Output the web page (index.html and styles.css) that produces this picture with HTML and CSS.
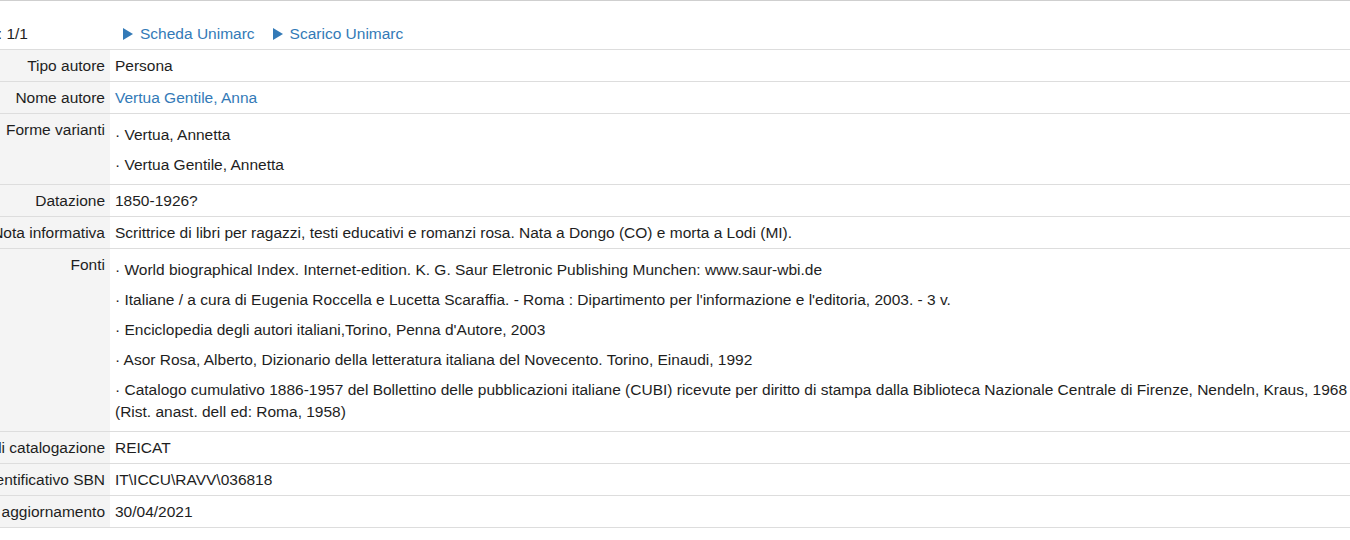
FILE: index.html
```html
<!DOCTYPE html>
<html lang="it">
<head>
<meta charset="utf-8">
<title>Vertua Gentile, Anna</title>
<link rel="stylesheet" href="styles.css">
</head>
<body>
<div class="record">
  <div class="toolbar">
    <div class="counter"><span>Risultati: 1/1</span></div>
    <div class="actions">
      <a class="action" href="#"><svg class="tri" viewBox="0 0 10 12" width="10" height="12"><polygon points="0,0 10,6 0,12" /></svg>Scheda Unimarc</a>
      <a class="action" href="#"><svg class="tri" viewBox="0 0 10 12" width="10" height="12"><polygon points="0,0 10,6 0,12" /></svg>Scarico Unimarc</a>
    </div>
  </div>
  <div class="row">
    <div class="label"><span>Tipo autore</span></div>
    <div class="value">Persona</div>
  </div>
  <div class="row">
    <div class="label"><span>Nome autore</span></div>
    <div class="value"><a class="link" href="#">Vertua Gentile, Anna</a></div>
  </div>
  <div class="row">
    <div class="label"><span>Forme varianti</span></div>
    <div class="value">
      <div class="item">· Vertua, Annetta</div>
      <div class="item">· Vertua Gentile, Annetta</div>
    </div>
  </div>
  <div class="row">
    <div class="label"><span>Datazione</span></div>
    <div class="value">1850-1926?</div>
  </div>
  <div class="row">
    <div class="label"><span>Nota informativa</span></div>
    <div class="value">Scrittrice di libri per ragazzi, testi educativi e romanzi rosa. Nata a Dongo (CO) e morta a Lodi (MI).</div>
  </div>
  <div class="row">
    <div class="label"><span>Fonti</span></div>
    <div class="value">
      <div class="item">· World biographical Index. Internet-edition. K. G. Saur Eletronic Publishing Munchen: www.saur-wbi.de</div>
      <div class="item">· Italiane / a cura di Eugenia Roccella e Lucetta Scaraffia. - Roma : Dipartimento per l'informazione e l'editoria, 2003. - 3 v.</div>
      <div class="item">· Enciclopedia degli autori italiani,Torino, Penna d'Autore, 2003</div>
      <div class="item">· Asor Rosa, Alberto, Dizionario della letteratura italiana del Novecento. Torino, Einaudi, 1992</div>
      <div class="item">· Catalogo cumulativo 1886-1957 del Bollettino delle pubblicazioni italiane (CUBI) ricevute per diritto di stampa dalla Biblioteca Nazionale Centrale di Firenze, Nendeln, Kraus, 1968 (Rist. anast. dell ed: Roma, 1958)</div>
    </div>
  </div>
  <div class="row">
    <div class="label"><span>Regole di catalogazione</span></div>
    <div class="value">REICAT</div>
  </div>
  <div class="row">
    <div class="label"><span>Codice identificativo SBN</span></div>
    <div class="value">IT\ICCU\RAVV\036818</div>
  </div>
  <div class="row last">
    <div class="label"><span>Data ultimo aggiornamento</span></div>
    <div class="value">30/04/2021</div>
  </div>
</div>
</body>
</html>
```

FILE: styles.css
```css
html, body {
  margin: 0;
  padding: 0;
  overflow: hidden;
  background: #fff;
}

body {
  font-family: "Liberation Sans", Arial, sans-serif;
  font-size: 15.5px;
  line-height: 21px;
  color: #1e1e1e;
}

.record {
  width: 1355px;
  border-top: 1px solid #cfcfcf;
}

.toolbar {
  display: flex;
  padding: 22px 0 5px 0;
}

.counter {
  width: 110px;
  flex: none;
  display: flex;
  justify-content: flex-end;
  overflow: hidden;
  white-space: nowrap;
  padding-right: 82px;
  box-sizing: border-box;
}

.actions {
  display: flex;
  padding-left: 13px;
  gap: 18px;
}

.action {
  display: flex;
  align-items: center;
  color: #337ab7;
  text-decoration: none;
}

.tri {
  fill: #337ab7;
  margin-right: 7px;
}

.row {
  display: flex;
  border-top: 1px solid #ddd;
}

.row.last {
  border-bottom: 1px solid #ddd;
}

.label {
  width: 110px;
  flex: none;
  box-sizing: border-box;
  background: #f4f4f4;
  display: flex;
  justify-content: flex-end;
  overflow: hidden;
  white-space: nowrap;
  padding: 5px 5px 5px 0;
}

.label span {
  flex: none;
}

.value {
  flex: 1;
  padding: 5px;
}

.item {
  line-height: 22px;
  padding: 5px 0 3px 0;
}

.link {
  color: #337ab7;
  text-decoration: none;
}
```
